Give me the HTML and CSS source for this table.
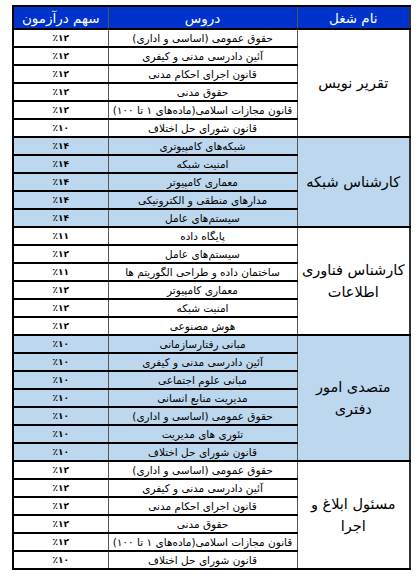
FILE: index.html
```html
<!DOCTYPE html>
<html lang="fa">
<head>
<meta charset="utf-8">
<link rel="stylesheet" href="styles.css">
</head>
<body>
<table class="sheet">
  <colgroup><col class="c-job"><col class="c-course"><col class="c-pct"></colgroup>
  <thead>
    <tr class="head"><th>نام شغل</th><th>دروس</th><th>سهم درآزمون</th></tr>
  </thead>
  <tbody class="g-white">
    <tr><td class="job" rowspan="6">تقریر نویس</td><td>حقوق عمومی (اساسی و اداری)</td><td class="pct">٪۱۲</td></tr>
    <tr><td>آئین دادرسی مدنی و کیفری</td><td class="pct">٪۱۲</td></tr>
    <tr><td>قانون اجرای احکام مدنی</td><td class="pct">٪۱۲</td></tr>
    <tr><td>حقوق مدنی</td><td class="pct">٪۱۲</td></tr>
    <tr><td>قانون مجازات اسلامی(ماده‌های ۱ تا ۱۰۰)</td><td class="pct">٪۱۲</td></tr>
    <tr><td>قانون شورای حل اختلاف</td><td class="pct">٪۱۰</td></tr>
  </tbody>
  <tbody class="g-blue">
    <tr><td class="job" rowspan="5">کارشناس شبکه</td><td>شبکه‌های کامپیوتری</td><td class="pct">٪۱۴</td></tr>
    <tr><td>امنیت شبکه</td><td class="pct">٪۱۴</td></tr>
    <tr><td>معماری کامپیوتر</td><td class="pct">٪۱۴</td></tr>
    <tr><td>مدارهای منطقی و الکترونیکی</td><td class="pct">٪۱۴</td></tr>
    <tr><td>سیستم‌های عامل</td><td class="pct">٪۱۴</td></tr>
  </tbody>
  <tbody class="g-white">
    <tr><td class="job" rowspan="6">کارشناس فناوری<br>اطلاعات</td><td>پایگاه داده</td><td class="pct">٪۱۱</td></tr>
    <tr><td>سیستم‌های عامل</td><td class="pct">٪۱۲</td></tr>
    <tr><td>ساختمان داده و طراحی الگوریتم ها</td><td class="pct">٪۱۱</td></tr>
    <tr><td>معماری کامپیوتر</td><td class="pct">٪۱۲</td></tr>
    <tr><td>امنیت شبکه</td><td class="pct">٪۱۲</td></tr>
    <tr><td>هوش مصنوعی</td><td class="pct">٪۱۲</td></tr>
  </tbody>
  <tbody class="g-blue">
    <tr><td class="job" rowspan="7">متصدی امور<br>دفتری</td><td>مبانی رفتارسازمانی</td><td class="pct">٪۱۰</td></tr>
    <tr><td>آئین دادرسی مدنی و کیفری</td><td class="pct">٪۱۰</td></tr>
    <tr><td>مبانی علوم اجتماعی</td><td class="pct">٪۱۰</td></tr>
    <tr><td>مدیریت منابع انسانی</td><td class="pct">٪۱۰</td></tr>
    <tr><td>حقوق عمومی (اساسی و اداری)</td><td class="pct">٪۱۰</td></tr>
    <tr><td>تئوری های مدیریت</td><td class="pct">٪۱۰</td></tr>
    <tr><td>قانون شورای حل اختلاف</td><td class="pct">٪۱۰</td></tr>
  </tbody>
  <tbody class="g-white">
    <tr><td class="job" rowspan="6">مسئول ابلاغ و<br>اجرا</td><td>حقوق عمومی (اساسی و اداری)</td><td class="pct">٪۱۲</td></tr>
    <tr><td>آئین دادرسی مدنی و کیفری</td><td class="pct">٪۱۲</td></tr>
    <tr><td>قانون اجرای احکام مدنی</td><td class="pct">٪۱۲</td></tr>
    <tr><td>حقوق مدنی</td><td class="pct">٪۱۲</td></tr>
    <tr><td>قانون مجازات اسلامی(ماده‌های ۱ تا ۱۰۰)</td><td class="pct">٪۱۲</td></tr>
    <tr><td>قانون شورای حل اختلاف</td><td class="pct">٪۱۰</td></tr>
  </tbody>
</table>
</body>
</html>
```
FILE: styles.css
```css
html, body { margin: 0; padding: 0; background: #fff; }
body {
  direction: ltr;
  font-family: "DejaVu Sans", "Noto Sans", sans-serif;
  color: #000;
}
.sheet {
  direction: rtl;
  border-collapse: collapse;
  table-layout: fixed;
  width: 397px;
  margin: 5px 0 0 12px;
  border-left: 2px solid #000;
  border-right: 2px solid #333;
}
.c-job { width: 113px; }
.c-course { width: 189px; }
.c-pct { width: 95px; }
.head th {
  background: #0033cc;
  color: #fff;
  font-weight: normal;
  font-size: 13.5px;
  height: 21px;
  padding: 0;
  text-align: center;
  overflow: hidden;
  border-top: 2px solid #000;
  border-bottom: 2px solid #000;
  border-left: 1px solid #555;
}
.sheet td {
  height: 16px;
  padding: 0;
  text-align: center;
  vertical-align: middle;
  font-size: 10.5px;
  line-height: 16px;
  white-space: nowrap;
  overflow: hidden;
  border-top: 2px solid #000;
  border-bottom: 2px solid #000;
  border-left: 1px solid #555;
}
.sheet td.job {
  font-size: 14.5px;
  line-height: 22px;
  white-space: normal;
  border-left: 1px solid #555;
}
.sheet td.pct {
  font-size: 9px;
  font-weight: bold;
  border-left: 2px solid #000;
}
.g-blue td { background: #bdd7ee; }
.g-white td { background: #fff; }
```
